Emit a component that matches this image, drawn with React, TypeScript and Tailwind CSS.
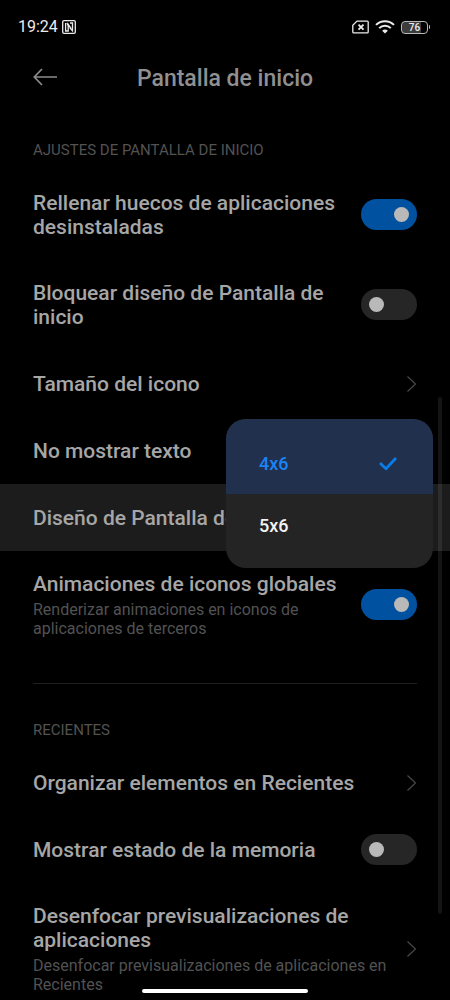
import { useState, type ReactNode } from "react";

const titleClass = "text-[21px] leading-6 font-medium text-[#a6a6a6]";
const subtitleClass = "mt-1 text-base leading-[19px] text-[#525252]";

function Chevron() {
  return (
    <svg
      className="h-[18px] w-3 shrink-0"
      viewBox="0 0 12 18"
      fill="none"
      stroke="#484848"
      strokeWidth="1.2"
      aria-hidden="true"
    >
      <path d="M2.5 1.5 10.5 9 2.5 16.5" />
    </svg>
  );
}

function SectionLabel({ children }: { children: ReactNode }) {
  return (
    <h2 className="px-[33px] text-[15px] leading-5 font-normal text-[#525252] uppercase">
      {children}
    </h2>
  );
}

function SwitchRow({
  title,
  subtitle,
  initial = false,
}: {
  title: string;
  subtitle?: string;
  initial?: boolean;
}) {
  const [on, setOn] = useState(initial);
  return (
    <label className="flex min-h-[67px] cursor-pointer items-center justify-between gap-6 px-[33px] py-[21px]">
      <span>
        <span className={`block ${titleClass}`}>{title}</span>
        {subtitle && <span className={`block ${subtitleClass}`}>{subtitle}</span>}
      </span>
      <span
        className={`-mt-[5px] -mb-1 flex h-[31px] w-14 shrink-0 items-center rounded-full px-2 ${
          on ? "justify-end bg-[#0052a0]" : "justify-start bg-[#262626]"
        }`}
      >
        <input
          type="checkbox"
          role="switch"
          className="sr-only"
          checked={on}
          onChange={(e) => setOn(e.target.checked)}
        />
        <span className="size-[15px] rounded-full bg-[#b9b9b9]" />
      </span>
    </label>
  );
}

function LinkRow({ title, subtitle }: { title: string; subtitle?: string }) {
  return (
    <button
      type="button"
      className="flex min-h-[67px] w-full items-center justify-between gap-4 px-[33px] py-[21px] text-left"
    >
      <span>
        <span className={`block ${titleClass}`}>{title}</span>
        {subtitle && <span className={`block ${subtitleClass}`}>{subtitle}</span>}
      </span>
      <Chevron />
    </button>
  );
}

function LayoutMenu() {
  const [value, setValue] = useState("4x6");
  return (
    <div
      role="listbox"
      aria-label="Diseño de Pantalla de inicio"
      className="absolute -top-[65px] right-[17px] z-10 w-[207px] overflow-hidden rounded-[20px] bg-[#242424]"
    >
      {["4x6", "5x6"].map((option, i) => {
        const selected = option === value;
        return (
          <button
            key={option}
            type="button"
            role="option"
            aria-selected={selected}
            onClick={() => setValue(option)}
            className={`flex w-full items-center justify-between pr-9 pl-[33px] text-lg leading-6 font-medium ${
              i === 0 ? "pt-[33px] pb-[18px]" : "pt-5 pb-[30px]"
            } ${selected ? "bg-[#20304d] text-[#1a84f5]" : "text-[#f2f2f2]"}`}
          >
            {option}
            {selected && (
              <svg
                className="h-[14px] w-[18px]"
                viewBox="0 0 18 14"
                fill="none"
                stroke="#0a7ce8"
                strokeWidth="2.8"
                strokeLinejoin="round"
                aria-hidden="true"
              >
                <path d="M1 6 7 11.8 17 1" />
              </svg>
            )}
          </button>
        );
      })}
    </div>
  );
}

function StatusBar() {
  return (
    <div className="flex h-[54px] shrink-0 items-center justify-between pr-5 pl-[18px] text-[#ececec]">
      <div className="flex items-center gap-1">
        <span className="text-base leading-5 font-normal">19:24</span>
        <svg
          className="size-[14px]"
          viewBox="0 0 14 14"
          fill="none"
          stroke="currentColor"
          strokeWidth="1.3"
          aria-hidden="true"
        >
          <rect x="0.7" y="0.7" width="12.6" height="12.6" rx="1.4" />
          <path d="M3.6 3v8h2.6V4.4l3 4.2" />
          <path d="M4.8 3.2 7.4 7M8 3h2.5v7.8L7.6 7.6" />
        </svg>
      </div>
      <div className="flex items-center gap-[6px]">
        <svg
          className="h-[14px] w-[17px]"
          viewBox="0 0 17 14"
          fill="none"
          stroke="currentColor"
          strokeWidth="1.3"
          aria-hidden="true"
        >
          <path d="M5 1.1h10.2a1 1 0 0 1 1 1v9.8a1 1 0 0 1-1 1H1.8a1 1 0 0 1-1-1V5.3z" />
          <path strokeWidth="1.8" d="m6.5 4.7 5 5m0-5-5 5" />
        </svg>
        <svg
          className="h-[14px] w-5"
          viewBox="0 0 20 14"
          fill="none"
          stroke="currentColor"
          strokeWidth="2"
          aria-hidden="true"
        >
          <path d="M1 4.9a12.8 12.8 0 0 1 18 0" />
          <path d="M4.2 8.1a8.2 8.2 0 0 1 11.6 0" />
          <path d="M7.1 10.7a4.4 4.4 0 0 1 5.8 0L10 13.6z" fill="currentColor" stroke="none" />
        </svg>
        <div className="flex items-center gap-px">
          <div className="flex h-[13px] w-[27px] items-center justify-center rounded-[4px] border border-[#b8b8b8] bg-linear-to-r from-[#3c3c3c] from-76% to-black to-76% text-[10px] leading-[11px] font-medium">
            76
          </div>
          <span className="h-1 w-px rounded-r-full bg-[#b8b8b8]" />
        </div>
      </div>
    </div>
  );
}

export default function App() {
  return (
    <div className="relative flex h-dvh flex-col overflow-hidden bg-black font-['Roboto',sans-serif]">
      <StatusBar />
      <header className="grid shrink-0 grid-cols-[24px_1fr_24px] items-start px-[33px] pt-[9px] pb-[31px]">
        <button type="button" aria-label="Atrás" className="flex h-7 items-center">
          <svg
            className="h-[18px] w-6"
            viewBox="0 0 24 18"
            fill="none"
            stroke="#8c8c8c"
            strokeWidth="1.7"
            aria-hidden="true"
          >
            <path d="M24 9H1.5M9 1 1.3 9 9 17" />
          </svg>
        </button>
        <h1 className="text-center text-[23px] leading-8 font-medium text-[#909090]">
          Pantalla de inicio
        </h1>
      </header>

      <main className="min-h-0 flex-1 overflow-y-auto pt-[14px] [scrollbar-width:none]">
        <SectionLabel>Ajustes de pantalla de inicio</SectionLabel>
        <div className="pt-[10px]">
          <SwitchRow title="Rellenar huecos de aplicaciones desinstaladas" initial />
          <SwitchRow title="Bloquear diseño de Pantalla de inicio" />
          <LinkRow title="Tamaño del icono" />
          <SwitchRow title="No mostrar texto" />
          <div className="relative bg-[#1c1c1c]">
            <LinkRow title="Diseño de Pantalla de inicio" />
            <LayoutMenu />
          </div>
          <SwitchRow
            title="Animaciones de iconos globales"
            subtitle="Renderizar animaciones en iconos de aplicaciones de terceros"
            initial
          />
        </div>
        <hr className="mx-[33px] mt-6 mb-9 border-[#1f1f1f]" />
        <SectionLabel>Recientes</SectionLabel>
        <div className="pt-[9px]">
          <LinkRow title="Organizar elementos en Recientes" />
          <SwitchRow title="Mostrar estado de la memoria" />
          <LinkRow
            title="Desenfocar previsualizaciones de aplicaciones"
            subtitle="Desenfocar previsualizaciones de aplicaciones en Recientes"
          />
        </div>
      </main>

      <div className="absolute top-[397px] right-2 h-[517px] w-1 rounded-full bg-[#ffffff14]" />
      <div className="absolute bottom-[7px] left-1/2 h-1 w-[166px] -translate-x-1/2 rounded-full bg-white" />
    </div>
  );
}
